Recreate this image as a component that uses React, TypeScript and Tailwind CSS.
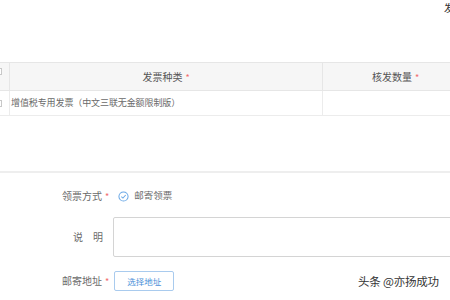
import React from "react";

const Star = () => <span className="text-[#f26b6b] text-[9px] ml-[3px] relative top-[1px]">*</span>;

const Box = () => <span className="inline-block w-[7px] h-[7px] border border-[#c8c8c8] bg-white" />;

export default function App() {
  return (
    <div
      className="w-[450px] h-[300px] bg-white overflow-hidden relative text-[#6a6a6a]"
      style={{ fontFamily: '"Noto Sans CJK SC", "Noto Sans", sans-serif' }}
    >
      <div className="h-[62px] flex justify-end">
        <span className="text-[10px] text-[#333] leading-none mt-[3px] mr-[-4px]">发</span>
      </div>
      <div className="-ml-[12px] w-[490px]">
        <div className="flex h-[29px] bg-[#f6f6f6] border-t border-b border-[#e6e6e6]">
          <div className="w-[22px] flex justify-center pt-[5px] border-r border-[#e6e6e6]">
            <Box />
          </div>
          <div className="w-[313px] flex items-center justify-center border-r border-[#e6e6e6] text-[10px] text-[#555]">
            发票种类<Star />
          </div>
          <div className="flex-1 flex items-center justify-center text-[10px] text-[#555] pr-[10px]">
            核发数量<Star />
          </div>
        </div>
        <div className="flex h-[25px] border-b border-[#ececec]">
          <div className="w-[22px] flex justify-center items-center border-r border-[#ececec]">
            <Box />
          </div>
          <div className="w-[313px] flex items-center border-r border-[#ececec] text-[9px] pl-[1px] tracking-[-0.1px]">
            增值税专用发票（中文三联无金额限制版）
          </div>
          <div className="flex-1" />
        </div>
      </div>
      <div className="mt-[55px] h-[2px] bg-[#eeeeee]" />
      <div className="flex items-center h-[20px] mt-[13px]">
        <div className="w-[102px] text-right text-[10px] leading-none">领票方式</div>
        <Star />
        <svg width="11" height="11" viewBox="0 0 12 12" className="ml-[9px]">
          <circle cx="6" cy="6" r="5" fill="none" stroke="#6aa8e6" strokeWidth="1.1" />
          <path d="M3.6 6.2 L5.4 7.8 L8.4 4.4" fill="none" stroke="#6aa8e6" strokeWidth="1.1" />
        </svg>
        <span className="ml-[5px] text-[9.5px] leading-none">邮寄领票</span>
      </div>
      <div className="flex mt-[11px] h-[40px]">
        <div className="w-[103px] flex items-center justify-end text-[10px] leading-none">
          说<span className="inline-block w-[10px]" />明
        </div>
        <div className="ml-[10px] flex-1 border border-[#d4d4d4] rounded-[2px] -mr-[10px]" />
      </div>
      <div className="flex items-center mt-[14px] h-[20px]">
        <div className="w-[102px] text-right text-[10px] leading-none">邮寄地址</div>
        <Star />
        <div className="ml-[5px] w-[60px] h-[20px] border border-[#a9cbee] rounded-[2px] flex items-center justify-center text-[8.5px] text-[#4a8fd8]">
          选择地址
        </div>
      </div>
      <div className="absolute left-[358px] top-[276px] text-[11.5px] text-[#333] leading-none tracking-[-0.2px]">
        头条 @亦扬成功
      </div>
    </div>
  );
}
